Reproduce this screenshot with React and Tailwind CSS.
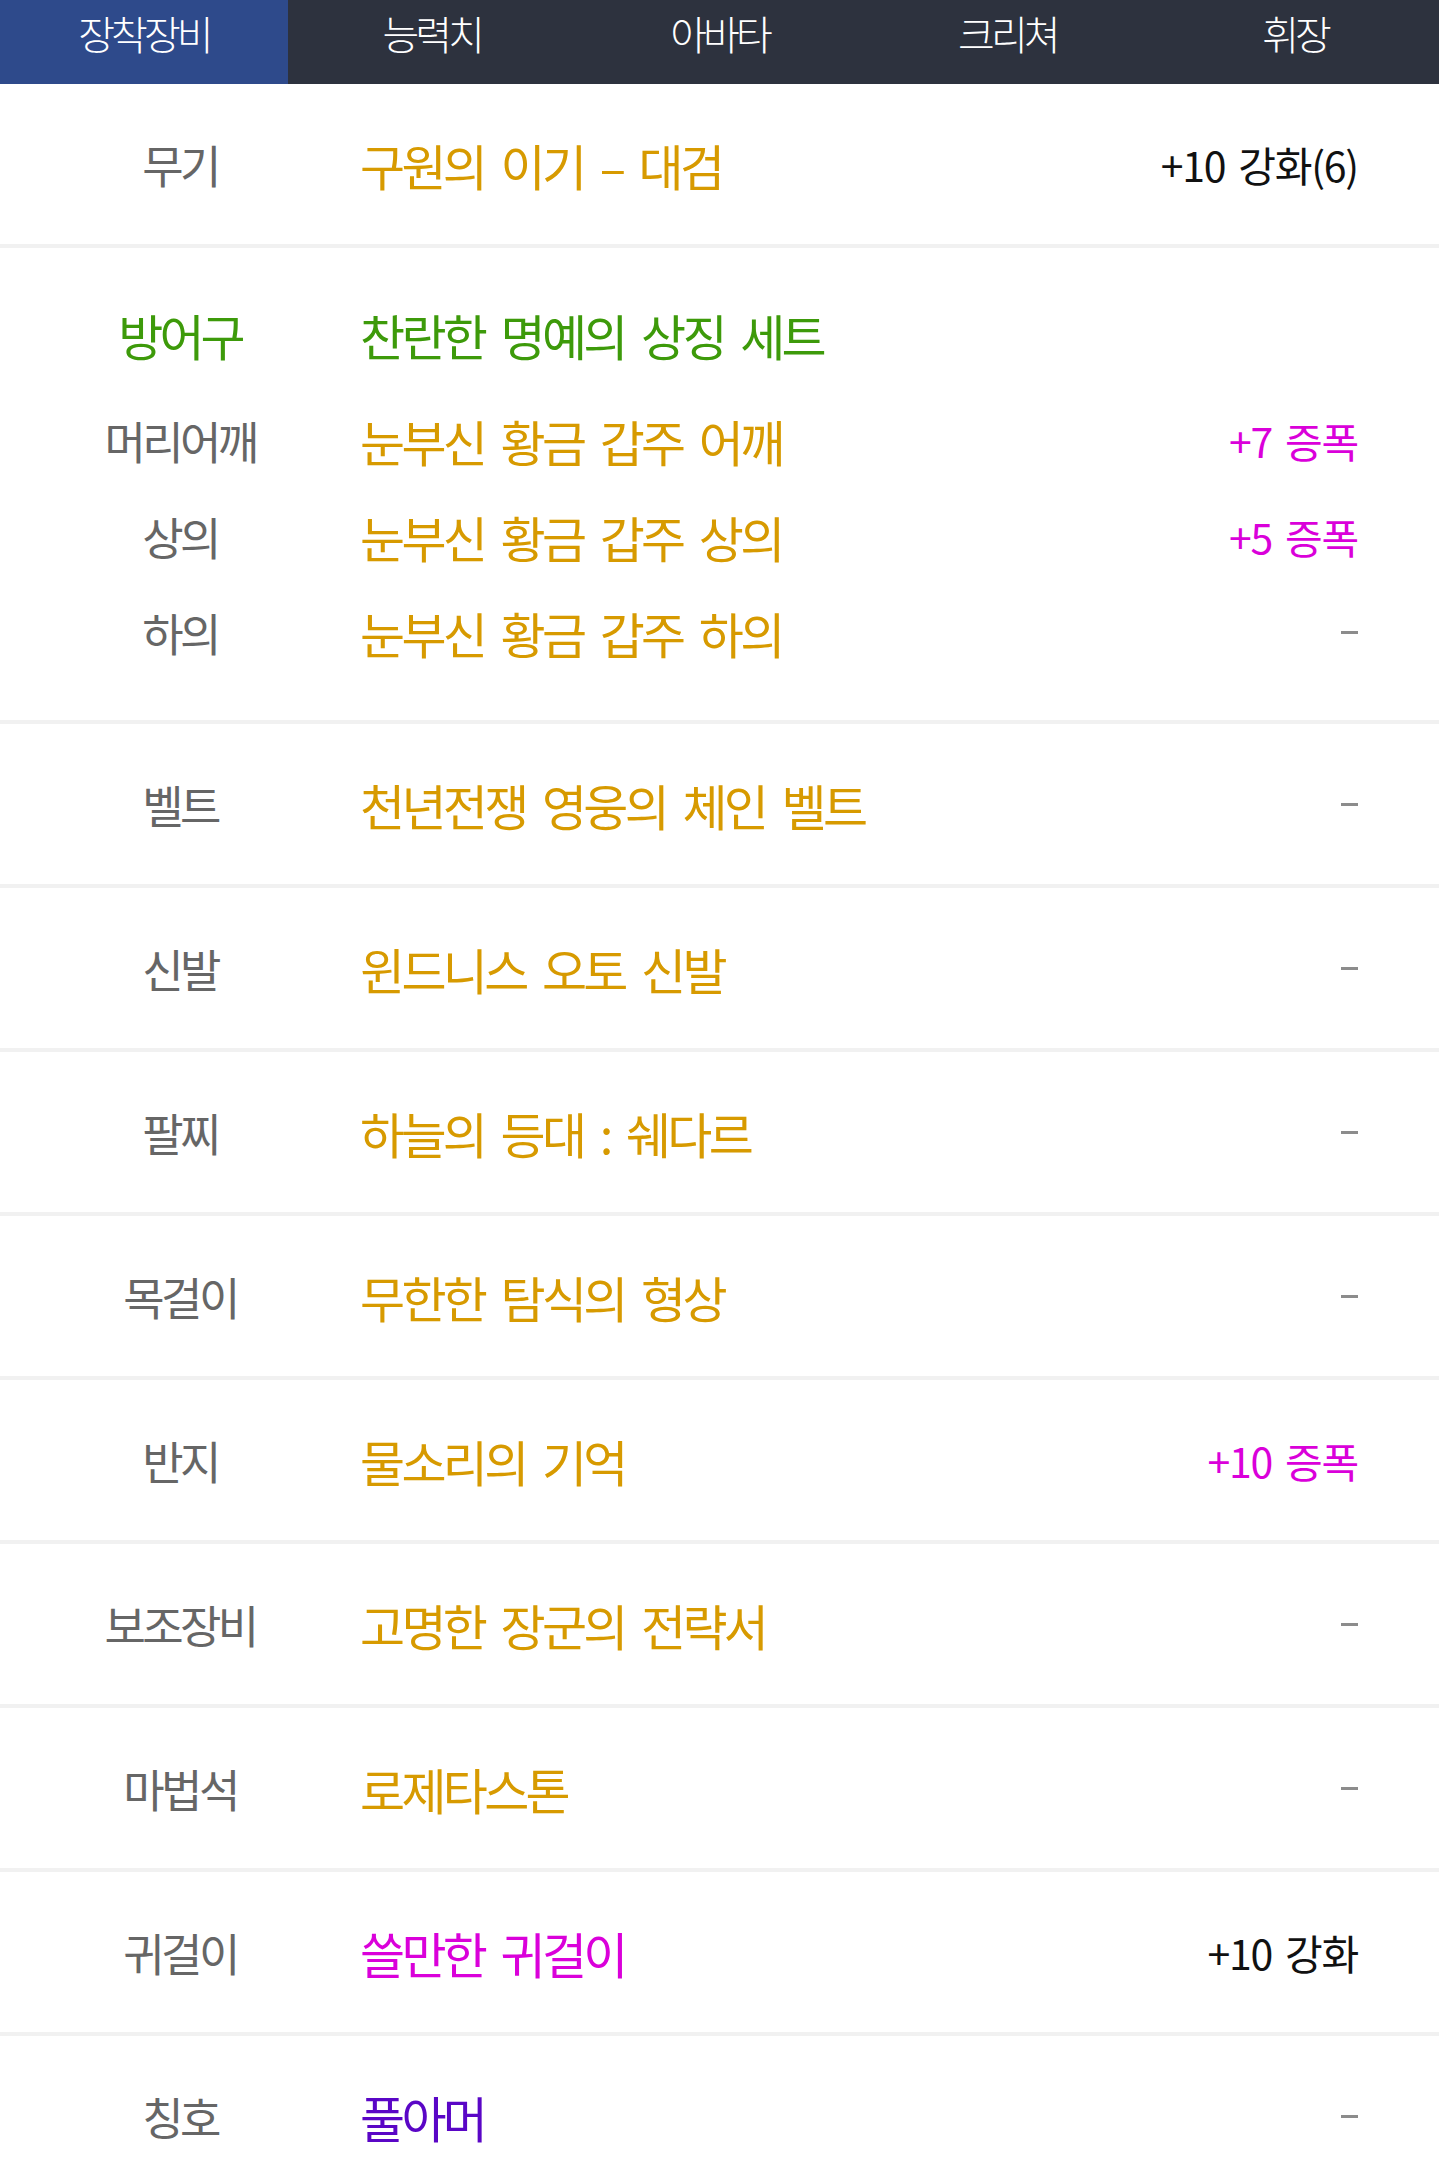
import React from "react"

const tabs = ["장착장비", "능력치", "아바타", "크리쳐", "휘장"]

const armor = [
    { label: "머리어깨", name: "눈부신 황금 갑주 어깨", value: "+7 증폭", tone: "amp" },
    { label: "상의", name: "눈부신 황금 갑주 상의", value: "+5 증폭", tone: "amp" },
    { label: "하의", name: "눈부신 황금 갑주 하의" },
]

const rest = [
    { label: "벨트", name: "천년전쟁 영웅의 체인 벨트" },
    { label: "신발", name: "윈드니스 오토 신발" },
    { label: "팔찌", name: "하늘의 등대 : 쉐다르" },
    { label: "목걸이", name: "무한한 탐식의 형상" },
    { label: "반지", name: "물소리의 기억", value: "+10 증폭", tone: "amp" },
    { label: "보조장비", name: "고명한 장군의 전략서" },
    { label: "마법석", name: "로제타스톤" },
    { label: "귀걸이", name: "쓸만한 귀걸이", color: "text-[#da00da]", value: "+10 강화" },
    { label: "칭호", name: "풀아머", color: "text-[#5a06c6]" },
]

function Value({ value, tone }) {
    if (!value) {
        return <span className="block h-[3px] w-[17px] bg-[#8c8c8c]" />
    }
    return (
        <span
            className={`text-[41px] leading-none tracking-[-0.03em] [word-spacing:5px] ${
                tone === "amp" ? "text-[#da00da]" : "text-[#111]"
            }`}
        >
            {value}
        </span>
    )
}

function Label({ children, color = "text-[#666]", size = "text-[45px]" }) {
    return (
        <div className={`w-[360px] shrink-0 text-center leading-none tracking-[-0.08em] ${size} ${color}`}>
            {children}
        </div>
    )
}

function ItemName({ children, color = "text-[#d79a00]" }) {
    return (
        <div className={`flex-1 text-[49px] leading-none tracking-[-0.075em] [word-spacing:9px] ${color}`}>
            {children}
        </div>
    )
}

function Row({ item }) {
    return (
        <div className="box-content flex h-[160px] items-center border-b-4 border-[#f1f1f1] pr-[81px]">
            <Label>{item.label}</Label>
            <ItemName color={item.color}>{item.name}</ItemName>
            <Value value={item.value} tone={item.tone} />
        </div>
    )
}

export default function App() {
    return (
        <div className="w-full bg-white font-['Noto_Sans_CJK_KR','Noto_Sans',sans-serif]">
            {/* tabs */}
            <div className="grid h-[84px] grid-cols-5 bg-[#2d323e]">
                {tabs.map((t, i) => (
                    <div
                        key={t}
                        className={`text-center text-[40px] font-light leading-[66px] tracking-[-0.1em] text-white ${
                            i === 0 ? "bg-[#2e4a8b]" : ""
                        }`}
                    >
                        {t}
                    </div>
                ))}
            </div>

            {/* weapon */}
            <Row item={{ label: "무기", name: "구원의 이기 – 대검", value: "+10 강화(6)" }} />

            {/* armor set */}
            <div className="flex flex-col border-b-4 border-[#f1f1f1] pt-[54px] pb-[56px]">
                <div className="flex h-[64px] items-center pr-[81px]">
                    <Label color="text-[#3d9a0a]" size="text-[49px]">방어구</Label>
                    <ItemName color="text-[#3d9a0a]">찬란한 명예의 상징 세트</ItemName>
                </div>
                {armor.map((a, i) => (
                    <div
                        key={a.label}
                        className={`flex h-[64px] items-center pr-[81px] ${i === 0 ? "mt-[42px]" : "mt-[32px]"}`}
                    >
                        <Label>{a.label}</Label>
                        <ItemName>{a.name}</ItemName>
                        <Value value={a.value} tone={a.tone} />
                    </div>
                ))}
            </div>

            {rest.map((r) => (
                <Row key={r.label} item={r} />
            ))}
        </div>
    )
}
